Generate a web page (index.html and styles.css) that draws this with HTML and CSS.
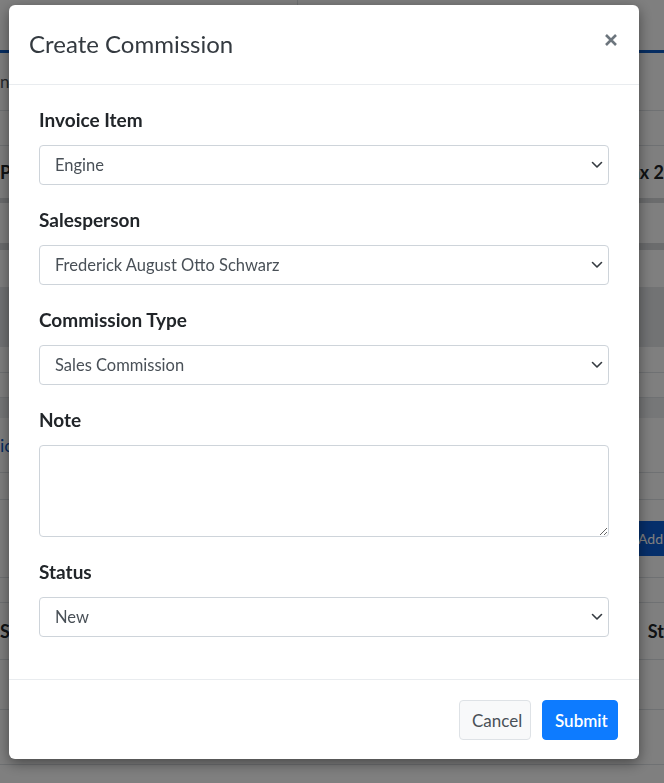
FILE: index.html
```html
<!DOCTYPE html>
<html lang="en">
<head>
<meta charset="utf-8">
<title>Create Commission</title>
<link rel="stylesheet" href="styles.css">
</head>
<body>
<div class="page">
  <div class="topbar"><div class="topbar-left"></div><div class="topbar-right"></div></div>
  <div class="tabline"></div>
  <div class="row tabs"><span class="tab-text">ns</span><span></span></div>
  <div class="row spacer"></div>
  <div class="row head"><span class="bold">Pr</span><span class="bold">ax 2</span></div>
  <div class="band b5"></div>
  <div class="row r40"></div>
  <div class="band b7"></div>
  <div class="row r37"></div>
  <div class="shade"></div>
  <div class="row r26"></div>
  <div class="row r25"></div>
  <div class="band b20"></div>
  <div class="row link"><span class="blue">ic</span><span></span></div>
  <div class="row r27"></div>
  <div class="row addrow"><span></span><span class="addbtn">Add</span></div>
  <div class="row r25"></div>
  <div class="row head2"><span class="bold">Sa</span><span class="bold">St</span></div>
  <div class="row r50"></div>
  <div class="row r55"></div>
</div>
<div class="overlay"></div>

<div class="modal">
  <div class="modal-header">
    <h5 class="modal-title">Create Commission</h5>
    <button class="close" type="button" aria-label="Close">
      <svg width="14" height="14" viewBox="0 0 14 14"><path d="M2 2 L12 12 M12 2 L2 12" stroke="#6c757d" stroke-width="2.6" stroke-linecap="butt" fill="none"/></svg>
    </button>
  </div>
  <div class="modal-body">
    <div class="group">
      <label class="label">Invoice Item</label>
      <div class="select"><span>Engine</span><svg class="chev" width="12" height="8" viewBox="0 0 12 8"><path d="M1.5 1.5 L6 6 L10.5 1.5" stroke="#343a40" stroke-width="1.6" fill="none" stroke-linecap="round" stroke-linejoin="round"/></svg></div>
    </div>
    <div class="group">
      <label class="label">Salesperson</label>
      <div class="select"><span>Frederick August Otto Schwarz</span><svg class="chev" width="12" height="8" viewBox="0 0 12 8"><path d="M1.5 1.5 L6 6 L10.5 1.5" stroke="#343a40" stroke-width="1.6" fill="none" stroke-linecap="round" stroke-linejoin="round"/></svg></div>
    </div>
    <div class="group">
      <label class="label">Commission Type</label>
      <div class="select"><span>Sales Commission</span><svg class="chev" width="12" height="8" viewBox="0 0 12 8"><path d="M1.5 1.5 L6 6 L10.5 1.5" stroke="#343a40" stroke-width="1.6" fill="none" stroke-linecap="round" stroke-linejoin="round"/></svg></div>
    </div>
    <div class="group">
      <label class="label">Note</label>
      <textarea class="textarea"></textarea>
    </div>
    <div class="group">
      <label class="label">Status</label>
      <div class="select"><span>New</span><svg class="chev" width="12" height="8" viewBox="0 0 12 8"><path d="M1.5 1.5 L6 6 L10.5 1.5" stroke="#343a40" stroke-width="1.6" fill="none" stroke-linecap="round" stroke-linejoin="round"/></svg></div>
    </div>
  </div>
  <div class="modal-footer">
    <button class="btn btn-light" type="button">Cancel</button>
    <button class="btn btn-primary" type="button">Submit</button>
  </div>
</div>
</body>
</html>
```
FILE: styles.css
```css
html, body {
  margin: 0;
  padding: 0;
  width: 664px;
  height: 783px;
  overflow: hidden;
  font-family: Lato, "Open Sans", sans-serif;
  background: #ffffff;
}

.page {
  width: 664px;
  height: 783px;
  overflow: hidden;
  background: #ffffff;
  display: flex;
  flex-direction: column;
}

.topbar {
  height: 50px;
  display: flex;
  flex: none;
}
.topbar-left {
  width: 297px;
  border-right: 1px solid #dee2e6;
}
.topbar-right { flex: 1; }

.tabline {
  height: 3px;
  background: #0d5bc4;
  flex: none;
}

.row {
  flex: none;
  box-sizing: border-box;
  display: flex;
  justify-content: space-between;
  align-items: center;
  border-bottom: 1px solid #dee2e6;
  font-size: 18px;
}
.tabs { height: 58px; }
.tab-text { color: #495057; font-size: 17px; }
.spacer { height: 35px; }
.head { height: 52px; border-bottom: none; }
.bold { font-weight: 700; color: #212529; }
.band { flex: none; background: #d6d8db; }
.b5 { height: 5px; }
.b7 { height: 7px; }
.b20 { height: 20px; background: #eceef0; }
.shade { flex: none; height: 60px; background: #e4e6e9; }
.r40 { height: 40px; border-bottom: none; }
.r37 { height: 37px; border-bottom: none; }
.r26 { height: 26px; }
.r25 { height: 25px; }
.r27 { height: 27px; }
.r50 { height: 50px; }
.r55 { height: 55px; }
.link { height: 55px; }
.blue { color: #0d5bc4; }
.addrow { height: 78px; }
.addbtn {
  background: #0b5ed7;
  color: #ffffff;
  height: 35px;
  line-height: 35px;
  padding: 0 0 0 1px;
  width: 26px;
  white-space: nowrap;
  font-size: 14px;
}
.head2 { height: 57px; }

.overlay {
  position: fixed;
  inset: 0;
  background: rgba(0, 0, 0, 0.5);
}

.modal {
  position: fixed;
  left: 9px;
  top: 5px;
  width: 630px;
  background: #ffffff;
  border-radius: 6px;
  box-shadow: 0 4px 14px rgba(0, 0, 0, 0.45);
  display: flex;
  flex-direction: column;
}

.modal-header {
  display: flex;
  align-items: center;
  justify-content: space-between;
  padding: 21px 20px 22px 20px;
  border-bottom: 1px solid #e9ecef;
}
.modal-title {
  margin: 0;
  font-size: 24px;
  line-height: 36px;
  font-weight: 400;
  color: #343a40;
}
.close {
  border: none;
  background: none;
  padding: 0;
  margin-right: 1px;
  margin-top: -9px;
  width: 14px;
  height: 14px;
  display: flex;
}

.modal-body {
  padding: 22px 30px 0 30px;
  display: flex;
  flex-direction: column;
}
.group {
  display: flex;
  flex-direction: column;
  margin-bottom: 22px;
}
.group:last-child { margin-bottom: 42px; }
.label {
  font-size: 19px;
  line-height: 26px;
  font-weight: 700;
  color: #212529;
  margin-bottom: 12px;
}
.select {
  height: 40px;
  box-sizing: border-box;
  border: 1px solid #ced4da;
  border-radius: 4px;
  display: flex;
  align-items: center;
  justify-content: space-between;
  padding: 0 5px 0 15px;
  font-size: 16.5px;
  color: #495057;
}
.textarea {
  height: 92px;
  box-sizing: border-box;
  border: 1px solid #ced4da;
  border-radius: 4px;
  resize: vertical;
  font-family: inherit;
  font-size: 16px;
  margin: 0;
  display: block;
  width: 100%;
}

.modal-footer {
  border-top: 1px solid #e9ecef;
  padding: 20px 21px 19px 20px;
  display: flex;
  justify-content: flex-end;
  gap: 11px;
}
.btn {
  height: 40px;
  box-sizing: border-box;
  border-radius: 4px;
  font-family: inherit;
  font-size: 17px;
  padding: 0 12px;
  cursor: pointer;
}
.btn-light {
  background: #f8f9fa;
  border: 1px solid #dee2e6;
  color: #495057;
  width: 72px;
}
.btn-primary {
  background: #0d7bff;
  border: 1px solid #0d7bff;
  color: #ffffff;
  width: 76px;
  font-weight: 600;
}
```
